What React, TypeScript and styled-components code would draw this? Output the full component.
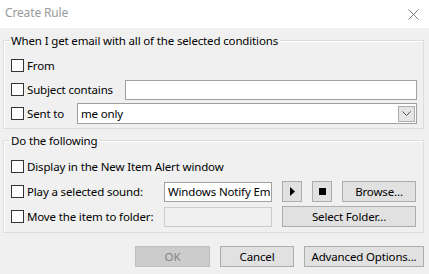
import React from 'react';
import styled, { createGlobalStyle } from 'styled-components';

const GlobalStyle = createGlobalStyle`
  html, body {
    margin: 0;
    padding: 0;
    background: #f0f0f0;
  }
  body {
    font-family: 'Noto Sans', 'Liberation Sans', sans-serif;
    font-size: 11.5px;
    letter-spacing: -0.15px;
    color: #000;
  }
`;

const Window = styled.div`
  width: 429px;
  height: 274px;
  display: flex;
  flex-direction: column;
  background: #f0f0f0;
  overflow: hidden;
`;

const TitleBar = styled.div`
  height: 28px;
  background: #fff;
  display: flex;
  align-items: center;
  justify-content: space-between;
  padding: 0 10px 0 5px;
  flex-shrink: 0;
`;

const Title = styled.span`
  color: #9a9a9a;
  font-size: 12px;
  line-height: 16px;
  margin-top: -2px;
`;

const Body = styled.div`
  display: flex;
  flex-direction: column;
  padding: 5px 5px 0 3px;
`;

const Group = styled.fieldset<{ $gap: number; $top: number; $bottom: number }>`
  margin: 0 0 4px;
  border: 1px solid #dcdcdc;
  box-shadow: inset 1px 1px 0 #fff;
  padding: ${(p) => p.$top}px 6px ${(p) => p.$bottom}px 7px;
  display: flex;
  flex-direction: column;
  gap: ${(p) => p.$gap}px;
  min-width: 0;
`;

const Legend = styled.legend`
  padding: 0 2px;
  margin-left: -2px;
  line-height: 15px;
  color: #000;
`;

const Row = styled.div`
  display: flex;
  align-items: center;
  height: 21px;
`;

const CheckLabel = styled.label<{ $width?: number }>`
  display: flex;
  align-items: center;
  gap: 3px;
  flex-shrink: 0;
  width: ${(p) => (p.$width ? `${p.$width}px` : 'auto')};
  white-space: nowrap;
`;

const Box = styled.span`
  width: 11px;
  height: 11px;
  border: 1px solid #333;
  background: #fff;
  flex-shrink: 0;
`;

const TextInput = styled.div<{ $width?: number; $disabled?: boolean }>`
  box-sizing: border-box;
  height: 20px;
  width: ${(p) => (p.$width ? `${p.$width}px` : 'auto')};
  flex: ${(p) => (p.$width ? 'none' : '1')};
  border: 1px solid ${(p) => (p.$disabled ? '#cccccc' : '#a0a0a0')};
  background: ${(p) => (p.$disabled ? '#f0f0f0' : '#fff')};
  padding: 0 3px;
  display: flex;
  align-items: center;
  overflow: hidden;
  white-space: nowrap;
`;

const Select = styled.div`
  box-sizing: border-box;
  height: 21px;
  flex: 1;
  border: 1px solid #a0a0a0;
  background: #fff;
  display: flex;
  align-items: center;
  padding: 0 1px 0 3px;
`;

const SelectValue = styled.span`
  flex: 1;
`;

const DropButton = styled.span`
  box-sizing: border-box;
  width: 17px;
  height: 16px;
  border: 1px solid #adadad;
  background: #e5e5e5;
  display: flex;
  align-items: center;
  justify-content: center;
`;

const Button = styled.button<{ $width: number; $disabled?: boolean }>`
  box-sizing: border-box;
  width: ${(p) => p.$width}px;
  height: 21px;
  border: 1px solid ${(p) => (p.$disabled ? '#bfbfbf' : '#adadad')};
  background: ${(p) => (p.$disabled ? '#cccccc' : '#e1e1e1')};
  color: ${(p) => (p.$disabled ? '#838383' : '#000')};
  font: inherit;
  letter-spacing: inherit;
  padding: 0;
  display: flex;
  align-items: center;
  justify-content: center;
  flex-shrink: 0;
`;

const Footer = styled.div`
  display: flex;
  justify-content: flex-end;
  gap: 10px;
  padding: 9px 0 0;
`;

const Spacer = styled.span<{ $w: number }>`
  width: ${(p) => p.$w}px;
  flex-shrink: 0;
`;

const Check = ({ label, width }: { label: string; width?: number }) => (
  <CheckLabel $width={width}>
    <Box />
    {label}
  </CheckLabel>
);

export default function App() {
  return (
    <Window>
      <GlobalStyle />
      <TitleBar>
        <Title>Create Rule</Title>
        <svg width="11" height="11" viewBox="0 0 11 11">
          <path d="M0.5 0.5 L10.5 10.5 M10.5 0.5 L0.5 10.5" stroke="#7a7a7a" strokeWidth="1" />
        </svg>
      </TitleBar>
      <Body>
        <Group $gap={3} $top={7} $bottom={4}>
          <Legend>When I get email with all of the selected conditions</Legend>
          <Row>
            <Check label="From" />
          </Row>
          <Row>
            <Check label="Subject contains" width={114} />
            <TextInput />
          </Row>
          <Row>
            <Check label="Sent to" width={66} />
            <Select>
              <SelectValue>me only</SelectValue>
              <DropButton>
                <svg width="9" height="5" viewBox="0 0 9 5">
                  <path d="M0.5 0.5 L4.5 4.5 L8.5 0.5" fill="none" stroke="#555" strokeWidth="1" />
                </svg>
              </DropButton>
            </Select>
          </Row>
        </Group>
        <Group $gap={4} $top={8} $bottom={5}>
          <Legend>Do the following</Legend>
          <Row>
            <Check label="Display in the New Item Alert window" />
          </Row>
          <Row>
            <Check label="Play a selected sound:" width={153} />
            <TextInput $width={108}>Windows Notify Em</TextInput>
            <Spacer $w={10} />
            <Button $width={20}>
              <svg width="5" height="9" viewBox="0 0 5 9">
                <path d="M0 0 L5 4.5 L0 9 Z" fill="#000" />
              </svg>
            </Button>
            <Spacer $w={10} />
            <Button $width={20}>
              <svg width="7" height="7" viewBox="0 0 7 7">
                <rect width="7" height="7" fill="#000" />
              </svg>
            </Button>
            <Spacer $w={10} />
            <Button $width={74}>Browse...</Button>
          </Row>
          <Row>
            <Check label="Move the item to folder:" width={153} />
            <TextInput $width={108} $disabled />
            <Spacer $w={10} />
            <Button $width={134}>Select Folder...</Button>
          </Row>
        </Group>
        <Footer>
          <Button $width={75} $disabled>OK</Button>
          <Button $width={74}>Cancel</Button>
          <Button $width={120}>Advanced Options...</Button>
        </Footer>
      </Body>
    </Window>
  );
}
